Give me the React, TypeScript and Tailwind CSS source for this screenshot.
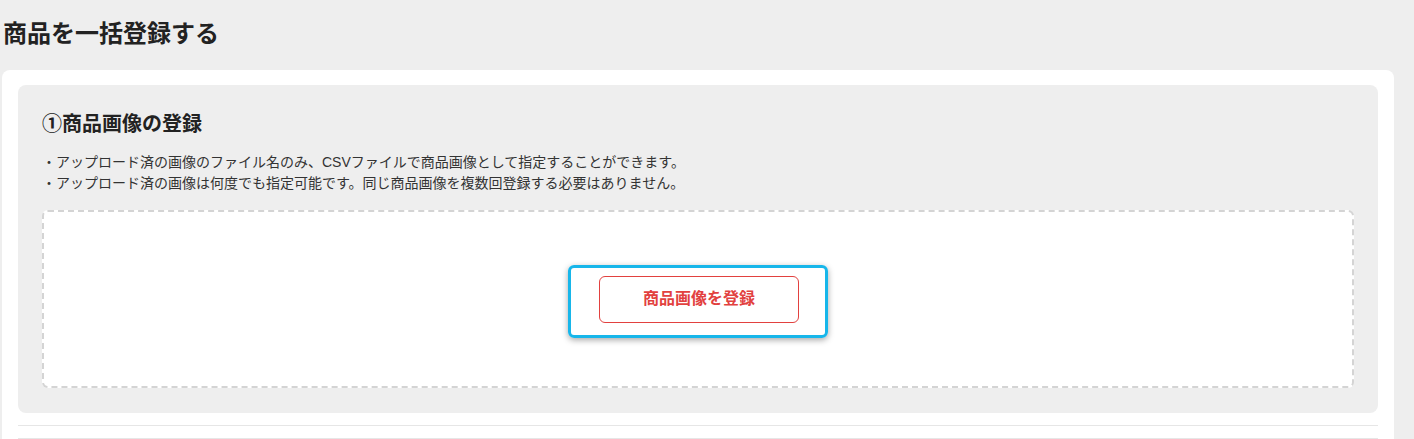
import React from "react";

const notes = [
  "・アップロード済の画像のファイル名のみ、CSVファイルで商品画像として指定することができます。",
  "・アップロード済の画像は何度でも指定可能です。同じ商品画像を複数回登録する必要はありません。",
];

const App = () => {
  return (
    <div
      className="min-h-screen bg-[#eeeeee] text-[#333333]"
      style={{ fontFamily: '"Liberation Sans", "Noto Sans CJK JP", sans-serif' }}
    >
      <h1 className="pl-[3px] pt-[16px] text-[24px] font-bold leading-[36px] text-[#222222]">
        商品を一括登録する
      </h1>

      <div className="ml-[2px] mr-[20px] mt-[18px] rounded-lg bg-white px-4 pt-[15px] pb-4">
        <section className="rounded-lg bg-[#eeeeee] px-6 pt-[25px] pb-[25px]">
          <h2 className="text-[20px] font-bold leading-[28px] text-[#222222]">①商品画像の登録</h2>

          <ul className="mt-[14px] text-[14px] leading-[21px]">
            {notes.map((n) => (
              <li key={n}>{n}</li>
            ))}
          </ul>

          <div className="mt-[16px] flex h-[178px] items-center justify-center rounded-md border-2 border-dashed border-[#d4d4d4] bg-white">
            <div className="mt-[4px] rounded-md border-[3px] border-[#17b6ea] pl-[28px] pr-[26px] pt-[8px] pb-[12px] shadow-[0_2px_6px_rgba(0,0,0,0.35)]">
              <button className="h-[47px] w-[200px] rounded-md border border-[#e2413f] bg-white text-[16px] font-bold text-[#e2413f]">
                商品画像を登録
              </button>
            </div>
          </div>
        </section>

        <div className="mt-[12px] h-[13px] border-t border-[#e6e6e6]" />
        <div className="h-[20px] border-t border-[#e6e6e6]" />
      </div>
    </div>
  );
};

export default App;
